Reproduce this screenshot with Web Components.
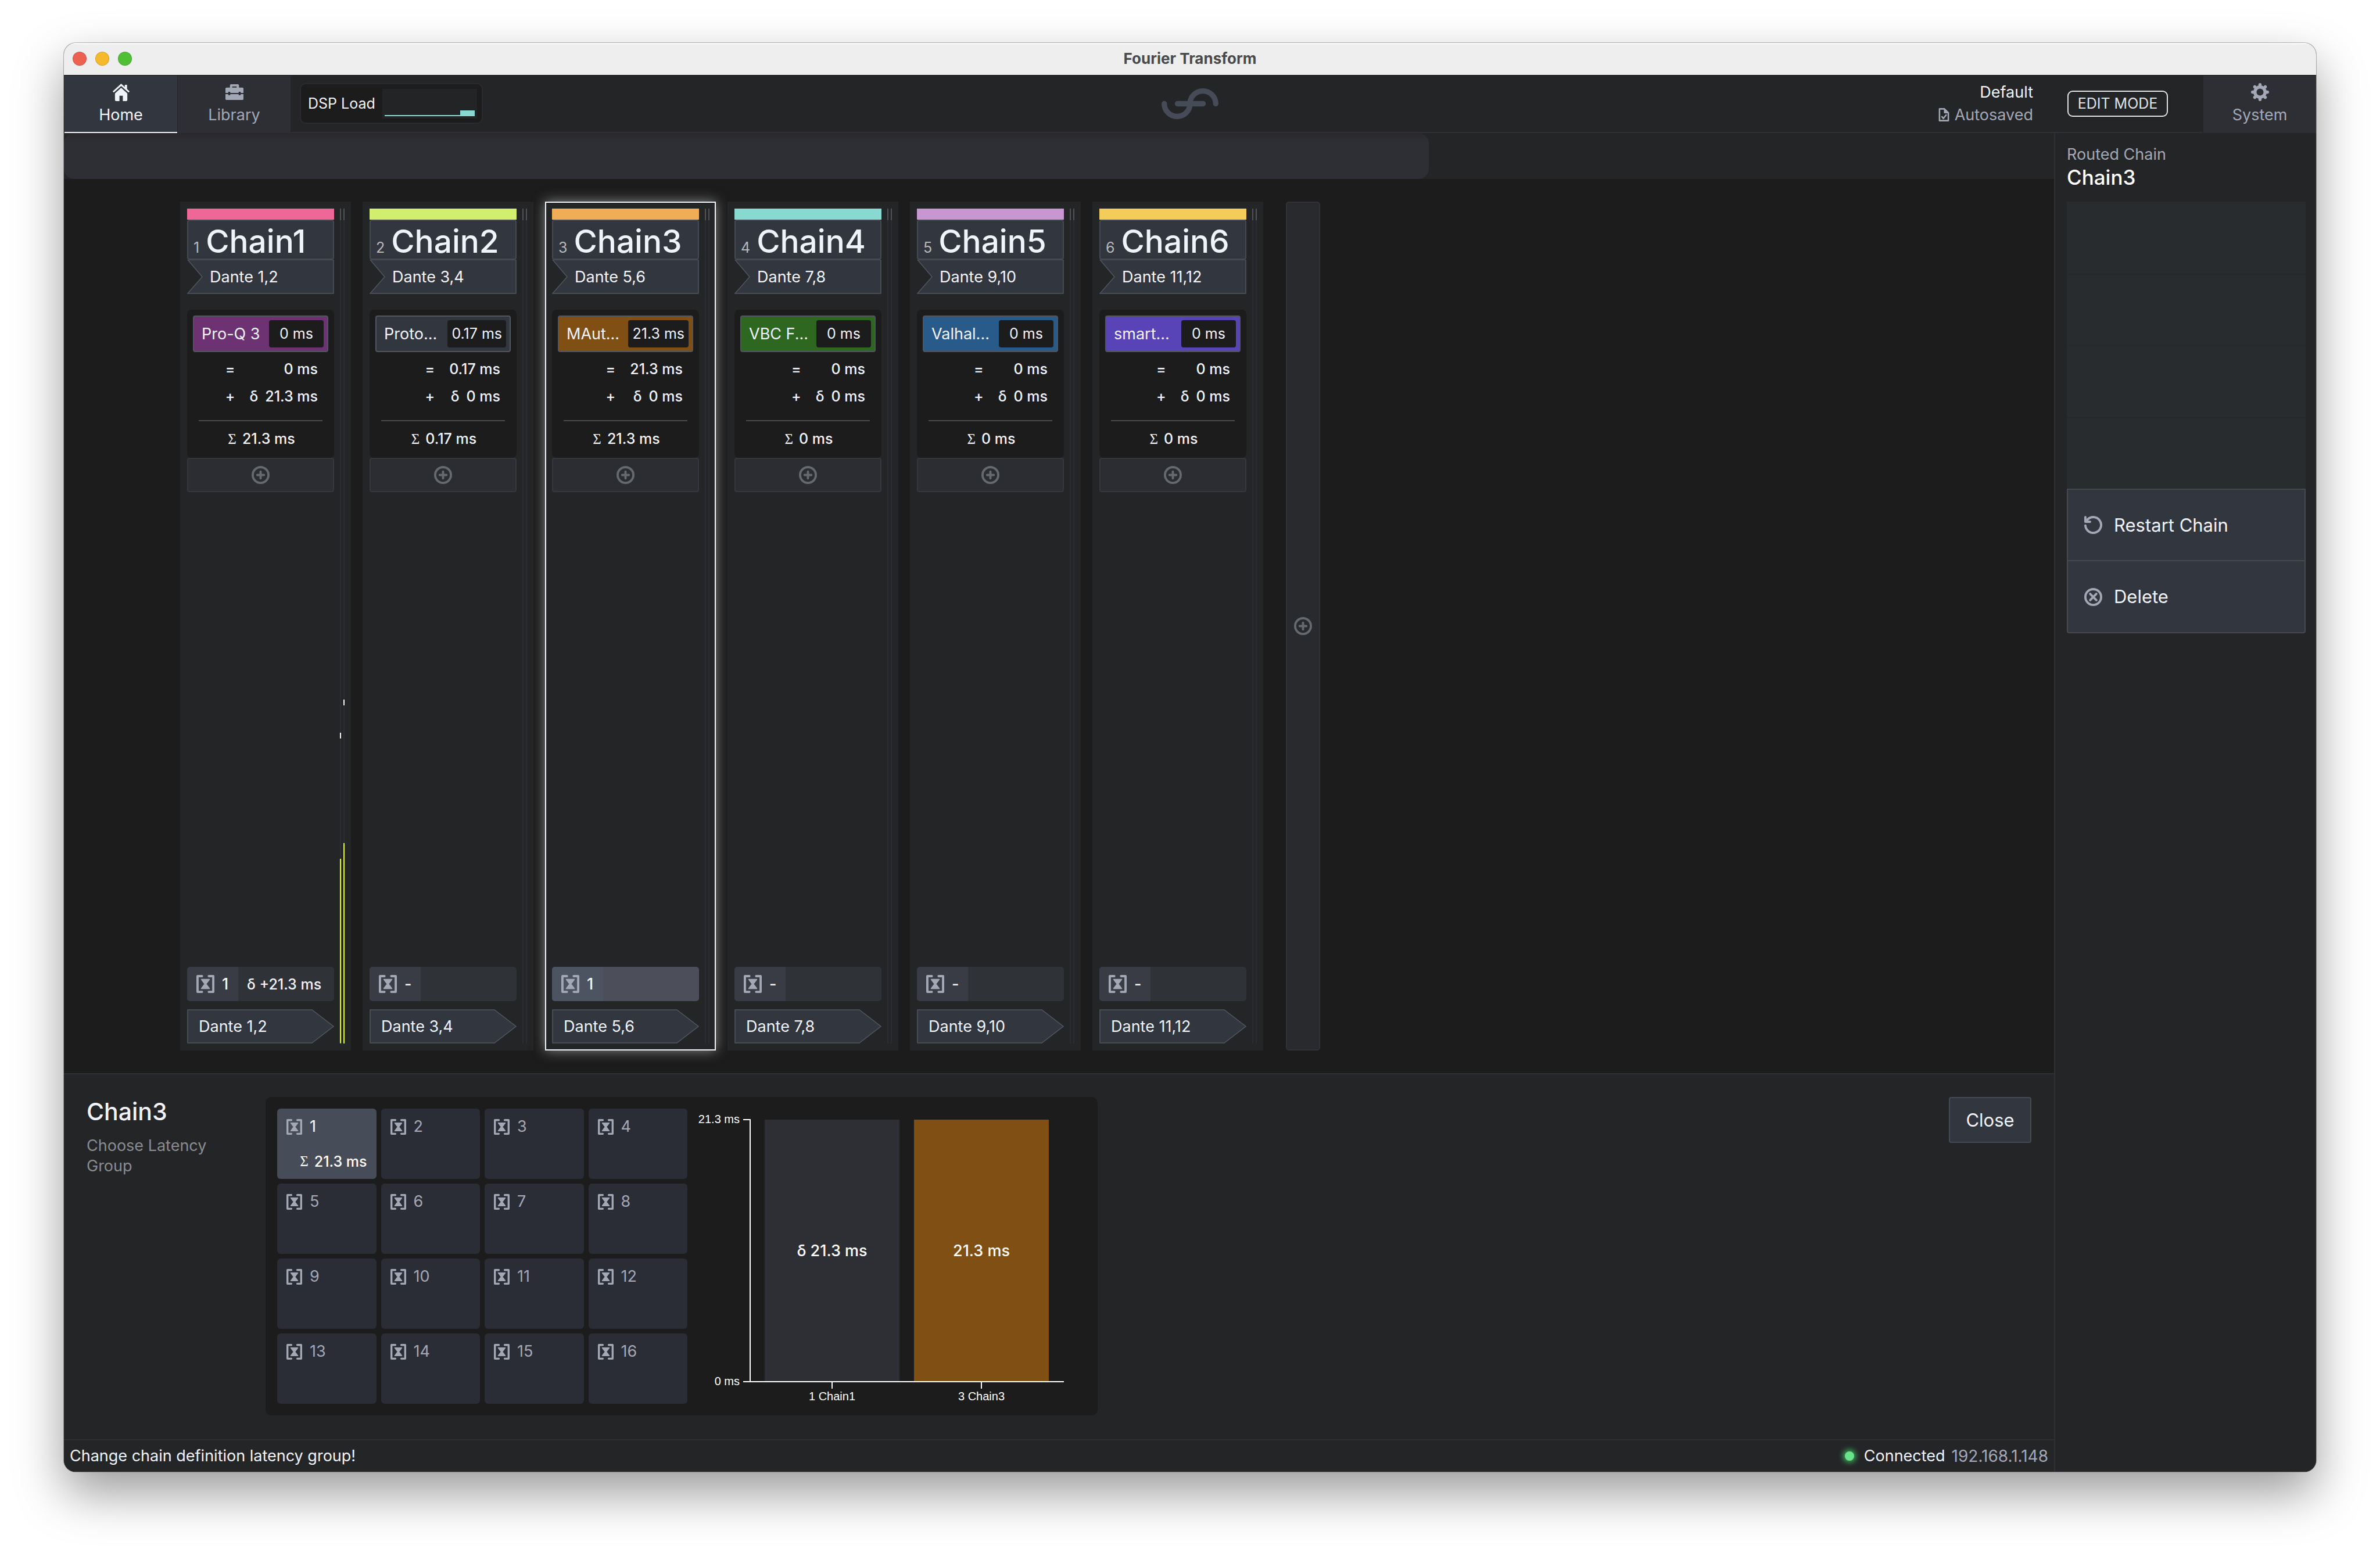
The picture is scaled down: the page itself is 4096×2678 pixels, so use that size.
<!DOCTYPE html>
<html lang="en">
<head>
<meta charset="utf-8">
<title>Fourier Transform</title>
<style>
  html, body { margin: 0; background: #fff; }
  body {
    font-family: Inter, "Liberation Sans", sans-serif;
    font-size: 27px; line-height: 32px; color: #f1f3fb;
    --bg: #242527; --dark: #1c1c1c; --line: #2e3035; --muted: #a3a8b6;
    --button: #32363f; --edge: #464a50;
  }
</style>
</head>
<body>
<app-window heading="Fourier Transform">
  <app-header slot="header"></app-header>
  <chain-rack slot="main"></chain-rack>
  <latency-panel slot="main"></latency-panel>
  <status-bar slot="main" message="Change chain definition latency group!" address="192.168.1.148"></status-bar>
  <chain-sidebar slot="side" name="Chain3"></chain-sidebar>
</app-window>

<script>
const ICONS = {
  home: `<path d="M16 1 1 14.6l1.9 2.3L16 5.2l13.100 11.700L31 14.600 26.500 10.500V3h-4v3.900z"/><path d="M16 8.300 5 18.200V30a2 2 0 0 0 2 2h6v-9.500h6V32h6a2 2 0 0 0 2-2V18.200z"/>`,
  library: `<path fill-rule="evenodd" d="M10 2h12a2 2 0 0 1 2 2v4h6a2 2 0 0 1 2 2v7.500h-5V15.500h-3.500v2h-15v-2H5v2H0V10a2 2 0 0 1 2-2h6V4a2 2 0 0 1 2-2zm2 4v2h8V6z"/><path d="M0 19.500h5v2h3.500v-2h15v2H27v-2h5V28a2 2 0 0 1-2 2H2a2 2 0 0 1-2-2z"/>`,
  gear: `<g fill="none" stroke="currentColor"><circle cx="16" cy="16" r="9" stroke-width="5.600"/><path stroke-width="5.600" stroke-linecap="round" d="M16 5V2.800M16 27v2.200M5 16H2.800M27 16h2.200M8.200 8.200 6.700 6.700M23.800 23.800l1.500 1.500M23.800 8.200l1.500-1.500M8.200 23.800l-1.500 1.500"/></g>`,
  file: `<g fill="none" stroke="currentColor" stroke-width="3" stroke-linejoin="round"><path d="M7 4h10l8 8v16H7z"/><path stroke-linecap="round" d="m12 20 3 3.500 5.500-7"/></g><path d="M16 3v10h10z"/>`,
  plus: `<g fill="none" stroke="currentColor" stroke-width="4"><circle cx="16" cy="16" r="14"/><path stroke-linecap="round" d="M16 10v12M10 16h12"/></g>`,
  restart: `<g fill="none" stroke="currentColor" stroke-width="4" stroke-linecap="round" stroke-linejoin="round"><path d="M2 17A14 14 0 1 0 5.600 6.600"/><path d="M2 2v8.300h8.300"/></g>`,
  remove: `<g fill="none" stroke="currentColor" stroke-width="4"><circle cx="16" cy="16" r="14"/><path stroke-linecap="round" d="m10.500 10.500 11 11m0-11-11 11"/></g>`,
  group: `<path fill="none" stroke="currentColor" stroke-width="4" stroke-linecap="round" stroke-linejoin="round" d="M10 2H2v28h8M22 2h8v28h-8"/><path stroke="currentColor" stroke-width="2" stroke-linejoin="round" d="M9 8h14l-6 8 6 8H9l6-8z"/>`
};

class Base extends HTMLElement {
  connectedCallback() {
    if (this.shadowRoot) return;
    const root = this.attachShadow({ mode: "open" });
    root.innerHTML = `<style>
      :host { box-sizing: border-box; }
      * { box-sizing: border-box; }
      button { font: inherit; color: inherit; margin: 0; padding: 0; border: 0; background: none; cursor: pointer; }
      ${this.styles()}</style>${this.markup()}`;
  }
  styles() { return ""; }
  markup() { return "<slot></slot>"; }
  attr(name) { return this.getAttribute(name) || ""; }
}

customElements.define("ui-icon", class extends Base {
  styles() { return `:host { display: block; flex: none; width: 31px; height: 31px; } svg { display: block; width: 100%; height: 100%; }`; }
  markup() { return `<svg viewBox="0 0 32 32" fill="currentColor" aria-hidden="true">${ICONS[this.attr("name")]}</svg>`; }
});

customElements.define("app-window", class extends Base {
  styles() { return `
    :host { display: flex; min-height: 100vh; padding: 74px 110px 145px; }
    .frame { flex: 1; display: flex; flex-direction: column; border-radius: 20px; overflow: hidden; background: var(--bg);
      box-shadow: 0 0 0 1px rgba(0,0,0,.28), 0 36px 84px rgba(0,0,0,.4); }
    .title { display: grid; grid-template-columns: 1fr auto 1fr; align-items: center; height: 56px; padding: 0 15px 2px;
      background: #eee; border-bottom: 1px solid #000; box-shadow: inset 0 2px 1px #fff; }
    .lights { display: flex; gap: 15px; }
    .lights i { width: 24px; height: 24px; border-radius: 50%; border: 1px solid rgba(0,0,0,.12); }
    h1 { margin: 0; font-size: 26px; line-height: 32px; font-weight: 700; color: #4a4a4a; }
    .body { flex: 1; display: flex; }
    main { flex: 1; min-width: 0; display: flex; flex-direction: column; }`; }
  markup() { return `<div class="frame">
    <div class="title"><div class="lights"><i style="background:#ed6150"></i><i style="background:#f5b92b"></i><i style="background:#50bf35"></i></div><h1>${this.attr("heading")}</h1></div>
    <slot name="header"></slot>
    <div class="body"><main><slot name="main"></slot></main><slot name="side"></slot></div>
  </div>`; }
});

customElements.define("nav-tab", class extends Base {
  styles() { return `
    :host { display: flex; }
    button { width: 195px; display: flex; flex-direction: column; align-items: center; gap: 8px; padding-top: 13px;
      background: #2e2f35; color: var(--muted); border-left: 1px solid var(--bg); }
    :host([active]) button { background: #32363f; color: #f1f3fb; box-shadow: inset 0 -2px #f1f3fb; }`; }
  markup() { return `<button type="button"><ui-icon name="${this.attr("icon")}"></ui-icon><span><slot></slot></span></button>`; }
});

customElements.define("app-header", class extends Base {
  styles() { return `
    :host { display: block; }
    header { display: grid; grid-template-columns: 1fr auto 1fr; height: 99px; background: linear-gradient(var(--line), var(--line)) bottom / 100% 2px no-repeat; }
    .side { display: flex; align-items: center; }
    .side nav-tab { align-self: stretch; }
    .right { justify-content: flex-end; }
    .dsp, .logo, .session, .edit { margin-bottom: 3px; }
    .dsp { display: flex; align-items: center; gap: 12px; height: 70px; margin-left: 16px; padding: 0 8px 0 12px; border: 2px solid #2a2b30; border-radius: 10px; background: var(--dark); font-size: 25px; white-space: nowrap; }
    .dsp svg { display: block; width: 163px; height: 51px; background: #232425; }
    .logo { align-self: center; width: 98px; height: 53px; }
    .session { text-align: right; }
    .session div { display: flex; justify-content: flex-end; align-items: center; gap: 5px; line-height: 39px; }
    .session ui-icon { width: 27px; height: 27px; }
    .saved { color: var(--muted); }
    .edit { height: 45px; width: 173px; margin-left: 59px; margin-right: 60px; border: 2px solid #e2e3e8; border-radius: 9px; font-size: 25px; color: #e2e3e8; white-space: nowrap; }`; }
  markup() { return `<header>
    <div class="side"><nav-tab icon="home" active>Home</nav-tab><nav-tab icon="library">Library</nav-tab>
      <div class="dsp">DSP Load<svg viewBox="0 0 163 51"><path fill="#88d9d1" d="M4 45h130v-8h25v10H4z"/></svg></div></div>
    <svg class="logo" viewBox="0 0 100 54" fill="none" stroke="#464b58" stroke-width="9.500" stroke-linecap="round"><path d="M4.800 27a22.600 22.300 0 0 0 45.200 0a22.600 22.300 0 0 1 45.200 0M28 27h45"/></svg>
    <div class="side right"><div class="session"><div>Default</div><div class="saved"><ui-icon name="file"></ui-icon>Autosaved</div></div>
      <button class="edit" type="button">EDIT MODE</button><nav-tab icon="gear">System</nav-tab></div>
  </header>`; }
});

customElements.define("level-meter", class extends Base {
  styles() { return `
    :host { display: flex; gap: 4px; }
    i { width: 2px; background: linear-gradient(#fff, #fff) 0 var(--peak) / 2px var(--tick) no-repeat,
      linear-gradient(#e6ff00, #e6ff00) bottom / 2px var(--level) no-repeat,
      linear-gradient(#505257, #505257) top / 2px 20px no-repeat, #2c2d34; }`; }
  markup() {
    const pairs = (this.attr("levels") || "0/0 0/0").split(" ").map(p => p.split("/"));
    return pairs.map(([l, p]) => `<i style="--level:${l}%;--peak:${p}%;--tick:${p > 0 ? 10 : 0}px"></i>`).join("");
  }
});

customElements.define("port-button", class extends Base {
  styles() { return `
    :host { display: block; }
    button { display: grid; width: 100%; height: 59px; align-items: center; text-align: left; }
    svg, span { grid-area: 1 / 1; }
    svg { width: 100%; height: 59px; overflow: hidden; }
    span { padding-left: 39px; }
    :host([out]) span { padding-left: 20px; }`; }
  markup() {
    const d = this.hasAttribute("out") ? "M1 1H215L252 29.500 215 58H1z" : "M1 0H252V58H1L26 29.500z";
    return `<button type="button"><svg viewBox="0 0 253 59" preserveAspectRatio="none"><path fill="#32363f" stroke="#50555f" stroke-width="1.500" d="${d}"/></svg><span><slot></slot></span></button>`;
  }
});

customElements.define("chain-strip", class extends Base {
  styles() { return `
    :host { display: flex; gap: 10px; width: 294px; padding: 12px 11px 12px 12px; background: var(--bg); }
    :host([selected]) { outline: 2px solid #f1f3fb; outline-offset: -2px; box-shadow: 0 0 20px rgba(241,243,251,.5); }
    .body { flex: 1; min-width: 0; display: flex; flex-direction: column; }
    .color { height: 19px; background: var(--chain); }
    .name { display: flex; align-items: baseline; gap: 11px; height: 69px; padding: 6px 0 0 9px; border: 2px solid var(--edge); border-radius: 4px;
      background: var(--button); font-size: 55px; line-height: 58px; font-weight: 500; white-space: nowrap; }
    .name small { font-size: 25px; font-weight: 400; color: #b9b9b9; }
    .plugins { margin-top: 27px; padding: 10px 10px 17px; border-radius: 8px; background: var(--dark); font-size: 25px; }
    .plugin { display: flex; align-items: center; justify-content: space-between; width: 100%; height: 63px; padding: 0 6px 0 13px;
      border: 2px solid #50555f; border-radius: 4px; background: var(--plugin); font-size: 27px; white-space: nowrap; }
    .plugin b { min-width: 94px; padding: 0 7px; line-height: 47px; border-radius: 4px; background: var(--dark); font-size: 25px; font-weight: 400; text-align: center; }
    .sum { display: grid; grid-template-columns: auto auto; justify-content: end; column-gap: 25px; padding: 6px 18px 0 0; line-height: 47px; text-align: right; font-weight: 500; }
    .sum i, .total i { font-style: normal; }
    .sum i { margin-right: 12px; }
    hr { height: 2px; margin: 17px 10px 15px; border: 0; background: #4a4a4a; }
    .total { display: flex; justify-content: center; gap: 10px; padding-left: 3px; line-height: 31px; font-weight: 500; }
    .total i { font-family: "Liberation Serif", serif; font-weight: 400; }
    .add { display: grid; place-items: center; height: 59px; border: 2px solid #35373b; border-radius: 4px; background: #2c2d32; color: #646a6e; }
    .group { display: flex; height: 59px; margin: auto 0 14px; border-radius: 5px; overflow: hidden; background: #2f3236; text-align: left; align-items: center; font-size: 25px; font-weight: 500; white-space: nowrap; }
    .group span { display: flex; align-items: center; gap: 13px; width: 88px; height: 100%; margin-right: 15px; padding-left: 16px; background: #393b45; font-size: 27px; }
    .group ui-icon { color: var(--muted); }
    :host([selected]) .group { background: #4c4f59; }
    :host([selected]) .group span { background: #4c5462; }`; }
  markup() {
    const a = n => this.attr(n);
    return `<div class="body">
      <div class="color" style="--chain:${a("color")}"></div>
      <button class="name" type="button"><small>${a("number")}</small>Chain${a("number")}</button>
      <port-button>${a("port")}</port-button>
      <div class="plugins" style="--plugin:${a("plugin-color")}">
        <button class="plugin" type="button">${a("plugin")}<b>${a("latency")}</b></button>
        <div class="sum"><span>=</span><span>${a("latency")}</span><span>+</span><span><i>δ</i>${a("delta")}</span></div>
        <hr>
        <div class="total"><i>Σ</i>${a("total")}</div>
      </div>
      <button class="add" type="button" aria-label="Add plugin"><ui-icon name="plus"></ui-icon></button>
      <button class="group" type="button"><span><ui-icon name="group"></ui-icon>${a("group") || "-"}</span>${a("offset")}</button>
      <port-button out>${a("port")}</port-button>
    </div><level-meter levels="${a("levels")}"></level-meter>`;
  }
});

customElements.define("chain-rack", class extends Base {
  styles() { return `
    :host { flex: 1; display: flex; flex-direction: column; background: var(--dark); }
    .bar { height: 79px; background: var(--bg); }
    .bar div { width: calc(100% * 2348 / 3424); height: 100%; border-radius: 18px; background: linear-gradient(#2a282d, #2e2f35 16px); }
    .rack { flex: 1; display: flex; gap: 20px; padding: 39px 0 39px 200px; }
    .add { width: 59px; margin-left: 19px; display: grid; place-items: center; border: 2px solid #303237; border-radius: 5px; background: #282a2e; color: #646a6e; }`; }
  markup() {
    const chains = [
      ["#ef6797", "Dante 1,2", "Pro-Q 3", "#6c3272", "0 ms", "21.3 ms", "21.3 ms", `group="1" offset="δ +21.3 ms" levels="22.1/63.2 24/59.2"`],
      ["#d2ee6e", "Dante 3,4", "Proto...", "#32363f", "0.17 ms", "0 ms", "0.17 ms", ""],
      ["#f0ad56", "Dante 5,6", "MAut...", "#7f4f14", "21.3 ms", "0 ms", "21.3 ms", `group="1" selected`],
      ["#88d9d1", "Dante 7,8", "VBC F...", "#2e6720", "0 ms", "0 ms", "0 ms", ""],
      ["#c897d1", "Dante 9,10", "Valhal...", "#285b8a", "0 ms", "0 ms", "0 ms", ""],
      ["#f4cc5a", "Dante 11,12", "smart...", "#5843b7", "0 ms", "0 ms", "0 ms", ""]
    ];
    return `<div class="bar"><div></div></div><div class="rack">${chains.map(([c, port, pl, pc, lat, delta, total, more], i) =>
      `<chain-strip number="${i + 1}" color="${c}" port="${port}" plugin="${pl}" plugin-color="${pc}" latency="${lat}" delta="${delta}" total="${total}" ${more}></chain-strip>`).join("")}
      <button class="add" type="button" aria-label="Add chain"><ui-icon name="plus"></ui-icon></button></div>`;
  }
});

customElements.define("latency-chart", class extends Base {
  styles() { return `
    :host { display: block; }
    svg { display: block; width: 677px; height: 508px; }
    .axis { font: 20px "Liberation Sans", Arial, sans-serif; }
    .value { font-size: 27px; font-weight: 500; }`; }
  markup() { return `<svg viewBox="0 0 677 508" fill="#fff">
    <rect x="124" y="19" width="232" height="451" fill="#2e2f34"/><rect x="381" y="19" width="232" height="451" fill="#7f4f14"/>
    <path fill="none" stroke="#fff" stroke-width="2" d="M87 19h12v451M87 470h552M240 470v12M497 470v12"/>
    <g class="axis"><g text-anchor="end"><text x="81" y="25">21.3 ms</text><text x="81" y="476">0 ms</text></g>
    <g text-anchor="middle"><text x="240" y="502">1 Chain1</text><text x="497" y="502">3 Chain3</text></g></g>
    <g class="value" text-anchor="middle"><text x="240" y="254">δ 21.3 ms</text><text x="497" y="254">21.3 ms</text></g>
  </svg>`; }
});

customElements.define("latency-panel", class extends Base {
  styles() { return `
    :host { display: flex; align-items: flex-start; padding: 39px 39px 41px; border-top: 2px solid var(--line); background: var(--bg); }
    .intro { width: 308px; }
    h2 { margin: 0 0 16px; font-size: 41px; line-height: 50px; font-weight: 500; }
    p { margin: 0; line-height: 35px; color: #8b8c8f; width: 240px; }
    .card { display: flex; gap: 9px; padding: 20px; border-radius: 10px; background: var(--dark); }
    .grid { display: grid; grid-template-columns: repeat(4, 1fr); grid-auto-rows: 121px; gap: 8px; width: 706px; }
    .grid button { display: flex; flex-direction: column; justify-content: space-between; padding: 15px 16px 14px; border-radius: 6px; background: #2a2d36; color: var(--muted); }
    .grid span { display: flex; align-items: center; gap: 13px; }
    .grid ui-icon { width: 27px; height: 27px; color: var(--muted); }
    .grid .on { background: #474d58; color: #fff; }
    .grid .total { align-self: flex-end; gap: 10px; font-size: 25px; font-weight: 500; }
    i { font-family: "Liberation Serif", serif; font-style: normal; font-weight: 400; }
    .close { margin-left: auto; width: 142px; height: 79px; border: 2px solid var(--edge); border-radius: 4px; background: var(--button); font-size: 31px; }`; }
  markup() {
    const cells = Array.from({ length: 16 }, (_, i) => `<button type="button"${i ? "" : ` class="on"`}><span><ui-icon name="group"></ui-icon>${i + 1}</span>${i ? "" : `<span class="total"><i>Σ</i>21.3 ms</span>`}</button>`);
    return `<div class="intro"><h2>Chain3</h2><p>Choose Latency Group</p></div>
      <div class="card"><div class="grid">${cells.join("")}</div><latency-chart></latency-chart></div>
      <button class="close" type="button">Close</button>`;
  }
});

customElements.define("status-bar", class extends Base {
  styles() { return `
    :host { display: flex; justify-content: space-between; align-items: center; height: 56px; padding: 0 10px; border-top: 2px solid var(--line); background: var(--bg); }
    div { display: flex; align-items: center; gap: 11px; }
    i { width: 16px; height: 16px; margin-right: 6px; border-radius: 50%; background: #68e389; box-shadow: 0 0 10px 3px #3fae5c; }
    span { color: var(--muted); font-size: 28px; }`; }
  markup() { return `${this.attr("message")}<div><i></i>Connected<span>${this.attr("address")}</span></div>`; }
});

customElements.define("chain-sidebar", class extends Base {
  styles() { return `
    :host { display: block; width: 451px; padding: 20px 18px 0 20px; border-left: 2px solid var(--line); background: var(--bg); }
    small { display: block; font-size: 27px; line-height: 33px; color: var(--muted); }
    h2 { margin: 0; font-size: 35px; line-height: 46px; font-weight: 500; color: #fff; }
    .list { display: grid; grid-template-rows: repeat(4, 1fr) 125px 124px; height: 743px; margin-top: 19px; }
    .list div { background: #292c2e; }
    .list div + div { border-top: 2px solid #26292b; }
    button { display: flex; align-items: center; gap: 20px; padding-left: 28px; border: 2px solid var(--edge); background: var(--button); font-size: 31px; }
    button + button { border-top: 0; border-radius: 0 0 4px 4px; }
    ui-icon { color: var(--muted); }`; }
  markup() { return `<small>Routed Chain</small><h2>${this.attr("name")}</h2>
    <div class="list"><div></div><div></div><div></div><div></div>
    <button type="button"><ui-icon name="restart"></ui-icon>Restart Chain</button>
    <button type="button"><ui-icon name="remove"></ui-icon>Delete</button></div>`; }
});
</script>
</body>
</html>
